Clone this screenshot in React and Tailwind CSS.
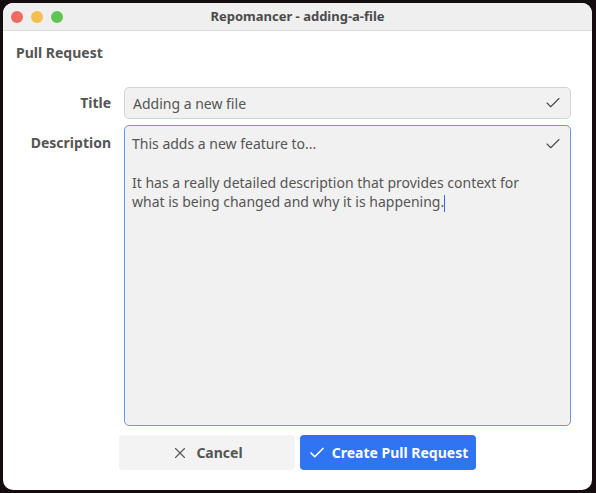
import { X, Check } from 'lucide-react'

function TrafficLights() {
  return (
    <div className="absolute left-[8px] top-[8px] flex gap-[8px]">
      <span className="w-[12px] h-[12px] rounded-full bg-[#ed6a5e]" />
      <span className="w-[12px] h-[12px] rounded-full bg-[#f5bf4f]" />
      <span className="w-[12px] h-[12px] rounded-full bg-[#61c554]" />
    </div>
  )
}

export default function App() {
  return (
    <div
      className="w-[596px] h-[493px] bg-[#140c0e] p-[3px] pr-[4px] pb-[3px]"
      style={{ fontFamily: '"Noto Sans", "Open Sans", sans-serif' }}
    >
      <div className="w-full h-full flex flex-col bg-white rounded-[10px] overflow-hidden">
        {/* title bar */}
        <div className="relative h-[28px] shrink-0 flex items-center justify-center bg-[#efefef] border-b border-[#dadada]">
          <TrafficLights />
          <span className="text-[13px] font-bold text-[#4b4b4b]">Repomancer - adding-a-file</span>
        </div>

        <div className="flex-1 flex flex-col px-[13px]">
          <div className="pt-[12px] text-[14px] font-bold text-[#555] leading-[19px]">Pull Request</div>

          <div className="mt-[25px] grid grid-cols-[95px_1fr] gap-x-[13px] gap-y-[6px] pr-[8px]">
            <div className="text-right text-[14px] font-bold text-[#555] leading-[32px]">Title</div>
            <div className="h-[32px] flex items-center justify-between pl-[8px] pr-[8px] bg-[#f1f1f1] border border-[#d3d3d3] rounded-[5px]">
              <span className="text-[14px] text-[#555]">Adding a new file</span>
              <Check size={18} strokeWidth={1.5} className="text-[#4a4a4a]" />
            </div>

            <div className="text-right text-[14px] font-bold text-[#555] pt-[8px] leading-[19px]">Description</div>
            <div className="h-[301px] flex justify-between pl-[7px] pr-[8px] pt-[8px] bg-[#f1f1f1] border border-[#7393e3] rounded-[5px]">
              <div className="text-[14px] text-[#555] leading-[19px] w-[400px]">
                <p>This adds a new feature to...</p>
                <p className="mt-[20px]">
                  It has a really detailed description that provides context for what is being changed and why it is happening.
                  <span className="inline-block w-px h-[17px] bg-[#3b66d8] align-middle" />
                </p>
              </div>
              <Check size={18} strokeWidth={1.5} className="text-[#4a4a4a] mt-[1px] shrink-0" />
            </div>
          </div>

          <div className="mt-[9px] flex justify-center gap-[5px]">
            <button className="w-[176px] h-[35px] flex items-center justify-center gap-[7px] bg-[#f3f3f3] rounded-[4px] text-[14px] font-bold text-[#555]">
              <X size={18} strokeWidth={1.5} />
              Cancel
            </button>
            <button className="w-[176px] h-[35px] flex items-center justify-center gap-[6px] bg-[#2f74f3] rounded-[4px] text-[14px] font-bold text-white">
              <Check size={18} strokeWidth={2.2} />
              Create Pull Request
            </button>
          </div>
        </div>
      </div>
    </div>
  )
}
